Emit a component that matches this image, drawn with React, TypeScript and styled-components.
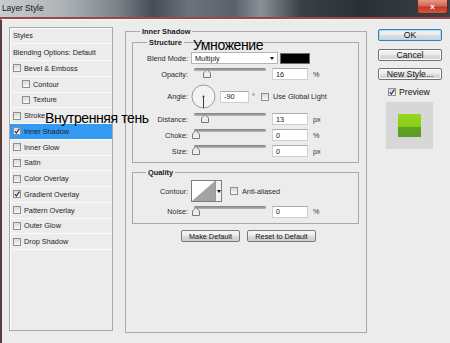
import React from 'react';
import styled, { createGlobalStyle } from 'styled-components';

const GlobalStyle = createGlobalStyle`
  html, body { margin: 0; padding: 0; background: #ececec; }
  * { box-sizing: border-box; }
`;

const Window = styled.div`
  position: relative;
  width: 450px;
  height: 343px;
  overflow: hidden;
  background: #ececec;
  font-family: 'Liberation Sans', Arial, sans-serif;
  color: #1b1b1b;
`;

const TitleBar = styled.div`
  height: 19px;
  display: flex;
  align-items: flex-start;
  justify-content: space-between;
  padding-left: 2px;
  background: linear-gradient(
    90deg,
    #c9ccce 0%,
    #aeb3b7 14%,
    #7c838a 26%,
    #454c53 34%,
    #6c737a 42%,
    #59616a 52%,
    #8a9096 58%,
    #3a4046 67%,
    #2b3035 80%,
    #3b4146 100%
  );
  border-bottom: 2px solid #9a474c;
`;

const Title = styled.span`
  font-size: 8.3px;
  line-height: 17px;
  color: #121212;
`;

const CloseButton = styled.div`
  width: 31px;
  height: 14px;
  margin-right: 2px;
  display: flex;
  align-items: center;
  justify-content: center;
  border: 1px solid #5c2a24;
  border-top: none;
  border-radius: 0 0 3px 3px;
  background: linear-gradient(#e59a86 0%, #d4664f 45%, #c0392a 55%, #cf5a3f 100%);
  color: #fff;
  font-size: 8px;
  font-weight: bold;
`;

const Body = styled.div`
  display: flex;
  height: 324px;
  border-left: 2px solid #5c3b3e;
  border-top: 1px solid #f6f6f6;
  padding: 7px 0 0 7px;
`;

/* ---------- left styles list ---------- */

const StylesPanel = styled.div`
  width: 104px;
  height: 304px;
  flex-shrink: 0;
  display: flex;
  flex-direction: column;
  border: 1px solid #a9a9a9;
  box-shadow: inset 1px 1px 0 #fff;
`;

const StyleRow = styled.div<{ $h: number; $indent?: boolean; $selected?: boolean }>`
  height: ${(p) => p.$h}px;
  flex-shrink: 0;
  display: flex;
  align-items: center;
  gap: 3px;
  padding-left: ${(p) => (p.$indent ? 12 : 3)}px;
  border-bottom: 1px solid #fafafa;
  background: ${(p) => (p.$selected ? '#3399f3' : 'transparent')};
  font-size: 7.3px;
  color: #1e1e1e;
  white-space: nowrap;
`;

const Box = styled.span`
  width: 8px;
  height: 8px;
  flex-shrink: 0;
  display: inline-flex;
  align-items: center;
  justify-content: center;
  border: 1px solid #8e8f8f;
  background: linear-gradient(#d9d9d9, #f7f7f7);
`;

const Check = ({ on }: { on?: boolean }) => (
  <Box>
    {on && (
      <svg width="6" height="6" viewBox="0 0 6 6">
        <path d="M0.8 3.2 L2.3 5 L5.4 0.6" fill="none" stroke="#1f2a5a" strokeWidth="1.1" />
      </svg>
    )}
  </Box>
);

/* ---------- middle group boxes ---------- */

const Middle = styled.div`
  margin-left: 12px;
  width: 242px;
  flex-shrink: 0;
`;

const Group = styled.fieldset<{ $h?: number; $mt?: number; $pad?: string }>`
  margin: ${(p) => p.$mt ?? 0}px 0 0 0;
  padding: ${(p) => p.$pad ?? '0'};
  border: 1px solid #a9a9a9;
  min-width: 0;
  ${(p) => (p.$h ? `height: ${p.$h}px;` : '')}
`;

const Legend = styled.legend<{ $ml: number }>`
  margin-left: ${(p) => p.$ml}px;
  padding: 0 2px;
  font-weight: bold;
  font-size: 7.4px;
  line-height: 9px;
  color: #1a1a1a;
`;

const Row = styled.div<{ $h: number }>`
  height: ${(p) => p.$h}px;
  display: flex;
  align-items: center;
  font-size: 7.3px;
  color: #2b2b2b;
  white-space: nowrap;
`;

const Label = styled.span`
  width: 54px;
  margin-right: 3px;
  text-align: right;
  flex-shrink: 0;
`;

const Select = styled.div`
  width: 87px;
  height: 12px;
  display: flex;
  align-items: center;
  justify-content: space-between;
  padding: 0 3px;
  background: #fff;
  border: 1px solid #b5b5b5;
  color: #1a1a1a;
`;

const Arrow = styled.span`
  width: 0;
  height: 0;
  border-left: 2.5px solid transparent;
  border-right: 2.5px solid transparent;
  border-top: 3px solid #111;
`;

const Swatch = styled.div`
  width: 30px;
  height: 11px;
  margin-left: 2px;
  background: #000;
  border: 1px solid #6d6d6d;
`;

const SliderWrap = styled.div`
  position: relative;
  width: 75px;
  height: 12px;
  flex-shrink: 0;
`;

const Track = styled.div`
  position: absolute;
  left: 3px;
  right: 0;
  top: 0;
  height: 3px;
  border-radius: 2px;
  background: linear-gradient(#7f7f7f, #b8b8b8);
`;

const Thumb = styled.svg`
  position: absolute;
  top: 1px;
`;

const Slider = ({ pct }: { pct: number }) => (
  <SliderWrap>
    <Track />
    <Thumb width="8" height="9" viewBox="0 0 8 9" style={{ left: `${0.5 + pct * 0.71}px` }}>
      <path d="M4 0.5 L7.5 4 V8.5 H0.5 V4 Z" fill="#ededed" stroke="#7a7a7a" strokeWidth="1" />
    </Thumb>
  </SliderWrap>
);

const Input = styled.div<{ $w?: number }>`
  width: ${(p) => p.$w ?? 36}px;
  height: 12px;
  margin-left: 6px;
  display: flex;
  align-items: center;
  padding-left: 3px;
  background: #fff;
  border: 1px solid #cfcfcf;
  border-top-color: #ababab;
  color: #1a1a1a;
  flex-shrink: 0;
`;

const Unit = styled.span<{ $ml?: number }>`
  margin-left: ${(p) => p.$ml ?? 5}px;
  color: #333;
`;

const SliderRow = ({ label, pct, value, unit }: { label: string; pct: number; value: string; unit: string }) => (
  <Row $h={16}>
    <Label>{label}</Label>
    <Slider pct={pct} />
    <Input>{value}</Input>
    <Unit>{unit}</Unit>
  </Row>
);

const Dial = () => (
  <svg width="25" height="25" viewBox="0 0 25 25">
    <circle cx="12.5" cy="12.5" r="11.5" fill="#f3f3f3" stroke="#9a9a9a" strokeWidth="1" />
    <line x1="12.5" y1="12.5" x2="12.5" y2="24" stroke="#3a3a3a" strokeWidth="1" />
    <circle cx="12.5" cy="12.5" r="1" fill="#3a3a3a" />
  </svg>
);

const ContourPicker = styled.div`
  width: 31px;
  height: 22px;
  display: flex;
  border: 1px solid #7c7c7c;
  background: #fff;
  flex-shrink: 0;
`;

const ContourDrop = styled.div`
  flex: 1;
  display: flex;
  align-items: center;
  justify-content: center;
  border-left: 1px solid #9a9a9a;
  background: #f2f2f2;
`;

const CheckLabel = styled.span<{ $ml: number }>`
  display: inline-flex;
  align-items: center;
  gap: 4px;
  margin-left: ${(p) => p.$ml}px;
  color: #2b2b2b;
`;

const ButtonRow = styled.div`
  display: flex;
  justify-content: center;
  gap: 7px;
  margin-top: 6px;
  padding-left: 6px;
`;

const SmallButton = styled.div<{ $w: number }>`
  width: ${(p) => p.$w}px;
  height: 12px;
  display: flex;
  align-items: center;
  justify-content: center;
  border: 1px solid #7a7a7a;
  border-radius: 2px;
  background: linear-gradient(#f6f6f6 0%, #ebebeb 48%, #dadada 52%, #cfcfcf 100%);
  font-size: 7.3px;
  color: #111;
`;

/* ---------- right column ---------- */

const RightCol = styled.div`
  margin-left: 11px;
  width: 64px;
  padding-top: 2px;
  display: flex;
  flex-direction: column;
  flex-shrink: 0;
`;

const DialogButton = styled.div<{ $default?: boolean; $mt: number }>`
  height: 12px;
  margin-top: ${(p) => p.$mt}px;
  display: flex;
  align-items: center;
  justify-content: center;
  border: 1px solid ${(p) => (p.$default ? '#3c7fb1' : '#707070')};
  border-radius: 2px;
  box-shadow: ${(p) => (p.$default ? 'inset 0 0 0 1px #a6dcf6' : 'inset 0 0 0 1px #fbfbfb')};
  background: linear-gradient(#f4f4f4 0%, #ebebeb 48%, #dcdcdc 52%, #d1d1d1 100%);
  font-size: 8.7px;
  color: #111;
`;

const PreviewCheck = styled.div`
  height: 16px;
  margin-top: 4px;
  padding-left: 10px;
  display: flex;
  align-items: center;
  gap: 3px;
  font-size: 8.7px;
  color: #111;
`;

const PreviewBox = styled.div`
  width: 47px;
  height: 47px;
  margin: 2px 0 0 8px;
  display: flex;
  align-items: center;
  justify-content: center;
  background: #d7d7d7;
`;

const GreenSquare = styled.div`
  width: 23px;
  height: 23px;
  background: linear-gradient(#97d81e 0%, #88cc1b 55%, #60a322 57%, #5a9c22 100%);
`;

/* ---------- overlaid annotations ---------- */

const Note = styled.span<{ $x: number; $y: number }>`
  position: absolute;
  left: ${(p) => p.$x}px;
  top: ${(p) => p.$y}px;
  font-family: 'Liberation Sans', Arial, sans-serif;
  font-size: 14px;
  line-height: 14px;
  letter-spacing: -0.4px;
  color: #000;
  white-space: nowrap;
`;

const styleItems: { name: string; on?: boolean; indent?: boolean; selected?: boolean }[] = [
  { name: 'Bevel & Emboss' },
  { name: 'Contour', indent: true },
  { name: 'Texture', indent: true },
  { name: 'Stroke' },
  { name: 'Inner Shadow', on: true, selected: true },
  { name: 'Inner Glow' },
  { name: 'Satin' },
  { name: 'Color Overlay' },
  { name: 'Gradient Overlay', on: true },
  { name: 'Pattern Overlay' },
  { name: 'Outer Glow' },
  { name: 'Drop Shadow' },
];

const App: React.FC = () => (
  <Window>
    <GlobalStyle />
    <TitleBar>
      <Title>Layer Style</Title>
      <CloseButton>x</CloseButton>
    </TitleBar>
    <Body>
      <StylesPanel>
        <StyleRow $h={16}>Styles</StyleRow>
        <StyleRow $h={17}>Blending Options: Default</StyleRow>
        {styleItems.map((s) => (
          <StyleRow key={s.name} $h={15.75} $indent={s.indent} $selected={s.selected}>
            <Check on={s.on} />
            {s.name}
          </StyleRow>
        ))}
      </StylesPanel>

      <Middle>
        <Group $h={306} $pad="0 7px 0 6px">
          <Legend $ml={8}>Inner Shadow</Legend>
          <Group $mt={2} $pad="3px 0 3px 1px">
            <Legend $ml={13}>Structure</Legend>
            <Row $h={16}>
              <Label>Blend Mode:</Label>
              <Select>
                Multiply
                <Arrow />
              </Select>
              <Swatch />
            </Row>
            <SliderRow label="Opacity:" pct={16} value="16" unit="%" />
            <Row $h={29}>
              <Label>Angle:</Label>
              <Dial />
              <Input $w={29} style={{ marginLeft: 4 }}>-90</Input>
              <Unit $ml={3}>°</Unit>
              <CheckLabel $ml={6}>
                <Check />
                Use Global Light
              </CheckLabel>
            </Row>
            <SliderRow label="Distance:" pct={13} value="13" unit="px" />
            <SliderRow label="Choke:" pct={0} value="0" unit="%" />
            <SliderRow label="Size:" pct={0} value="0" unit="px" />
          </Group>
          <Group $mt={5} $pad="2px 0 3px 1px">
            <Legend $ml={12}>Quality</Legend>
            <Row $h={24}>
              <Label>Contour:</Label>
              <ContourPicker>
                <svg width="23" height="20" viewBox="0 0 23 20">
                  <polygon points="0,20 23,0 23,20" fill="#a3a3a3" />
                </svg>
                <ContourDrop>
                  <Arrow />
                </ContourDrop>
              </ContourPicker>
              <CheckLabel $ml={8}>
                <Check />
                Anti-aliased
              </CheckLabel>
            </Row>
            <Row $h={17}>
              <Label>Noise:</Label>
              <Slider pct={0} />
              <Input>0</Input>
              <Unit>%</Unit>
            </Row>
          </Group>
          <ButtonRow>
            <SmallButton $w={59}>Make Default</SmallButton>
            <SmallButton $w={69}>Reset to Default</SmallButton>
          </ButtonRow>
        </Group>
      </Middle>

      <RightCol>
        <DialogButton $default $mt={0}>OK</DialogButton>
        <DialogButton $mt={8}>Cancel</DialogButton>
        <DialogButton $mt={7}>New Style...</DialogButton>
        <PreviewCheck>
          <Check on />
          Preview
        </PreviewCheck>
        <PreviewBox>
          <GreenSquare />
        </PreviewBox>
      </RightCol>
    </Body>

    <Note $x={193} $y={38}>Умножение</Note>
    <Note $x={45} $y={111}>Внутренняя тень</Note>
  </Window>
);

export default App;
